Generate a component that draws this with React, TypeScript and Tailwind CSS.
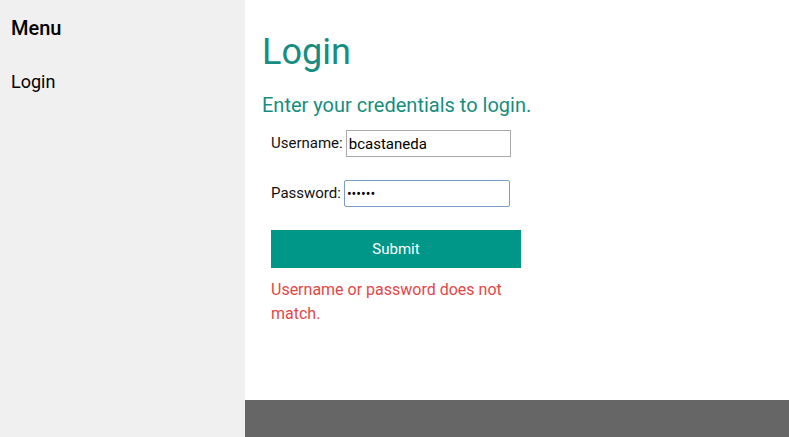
import { useState } from "react"

export default function App() {
  const [username, setUsername] = useState("bcastaneda")
  const [password, setPassword] = useState("secret")

  return (
    <div className="flex h-[437px] w-full font-['Roboto',sans-serif]">
      {/* Sidebar */}
      <aside className="w-[245px] shrink-0 bg-[#f0f0f0] px-[11px] pt-[16px]">
        <h2 className="text-[20px] font-medium leading-[24px] text-black">Menu</h2>
        <nav className="mt-[30px]">
          <a href="#" className="text-[18px] leading-[24px] text-black">
            Login
          </a>
        </nav>
      </aside>

      {/* Main */}
      <div className="flex flex-1 flex-col">
        <main className="flex-1 pl-[17px] pt-[30px]">
          <h1 className="text-[36px] leading-[44px] text-[#168d80]">Login</h1>
          <p className="mt-[19px] text-[20px] leading-[24px] text-[#168d80]">
            Enter your credentials to login.
          </p>

          <form className="ml-[9px] mt-[13px] w-[250px]" onSubmit={(e) => e.preventDefault()}>
            <div className="flex h-[27px] items-center">
              <label className="text-[15px] text-[#111]">Username:</label>
              <input
                value={username}
                onChange={(e) => setUsername(e.target.value)}
                className="ml-[3px] h-[27px] w-[165px] border border-[#a9a9a9] px-[2px] text-[15px] text-black outline-none"
              />
            </div>
            <div className="mt-[23px] flex h-[27px] items-center">
              <label className="text-[15px] text-[#111]">Password:</label>
              <input
                type="password"
                value={password}
                onChange={(e) => setPassword(e.target.value)}
                className="ml-[3px] h-[27px] w-[166px] rounded-[2px] border border-[#7a9cc6] px-[2px] text-[14px] text-black outline-none"
              />
            </div>
            <button
              type="submit"
              className="mt-[23px] h-[38px] w-[250px] bg-[#009688] text-[15px] text-white"
            >
              Submit
            </button>
            <p className="mt-[10px] text-[16px] leading-[24px] text-[#e04848]">
              Username or password does not match.
            </p>
          </form>
        </main>

        <footer className="h-[37px] bg-[#666666]" />
      </div>
    </div>
  )
}
